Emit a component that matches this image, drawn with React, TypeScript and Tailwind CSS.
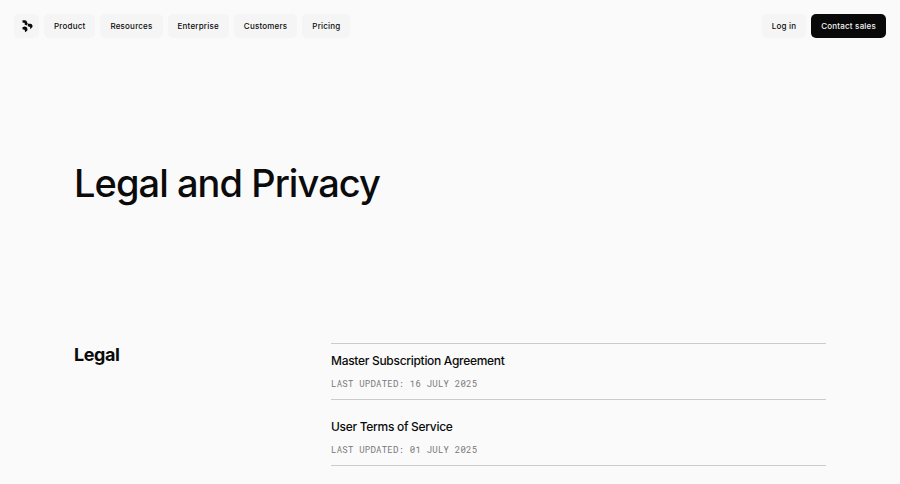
const NAV_ITEMS = ['Product', 'Resources', 'Enterprise', 'Customers', 'Pricing']

const DOCUMENTS = [
  { title: 'Master Subscription Agreement', updated: '16 July 2025' },
  { title: 'User Terms of Service', updated: '01 July 2025' },
]

const Logo = () => (
  <svg viewBox="0 0 24 24" className="size-6" fill="currentColor" aria-hidden="true">
    <path d="M7.5 6.2H9.8C11.2 6.2 11.8 7 12 8.2L12.8 9.8L11.6 11.4L9.6 10.6L9.8 9L7.5 8.4Z" />
    <path d="M12.8 9.8H15.2C16.8 9.8 17.6 11 17.6 12.8L15.4 15.2L15 13L12.8 12.2Z" />
    <path d="M7.5 13.2L9.6 12.6C11.4 12.8 12.4 13.6 12.4 15.2V16.6L10.2 18.2L9.6 15.8L7.5 15.2Z" />
  </svg>
)

const Header = () => (
  <header className="flex items-center justify-between px-[14px] pt-[14px] text-[8px] font-medium tracking-wide">
    <nav className="flex gap-[5px]">
      <a href="#" aria-label="Home" className="flex h-6 w-[25px] items-center justify-center rounded-[5px] bg-[#f5f5f5]">
        <Logo />
      </a>
      {NAV_ITEMS.map((item) => (
        <button key={item} type="button" className="h-6 rounded-[5px] bg-[#f5f5f5] px-[10px]">
          {item}
        </button>
      ))}
    </nav>
    <div className="flex gap-[5px]">
      <a href="#" className="flex h-6 items-center rounded-[5px] bg-[#f5f5f5] px-[10px]">Log in</a>
      <a href="#" className="flex h-6 items-center rounded-[5px] bg-[#090909] px-[10px] text-[#f4f4f4]">Contact sales</a>
    </div>
  </header>
)

const App = () => (
  <div className="min-h-screen bg-[#fafafa] font-['Inter',sans-serif] text-[#0b0b0b]">
    <Header />
    <main className="px-[74px]">
      <h1 className="pt-[121px] text-[38px] leading-[48px] font-medium tracking-tight">Legal and Privacy</h1>
      <section className="flex pt-[136px]">
        <h2 className="w-[257px] shrink-0 text-lg leading-6 font-bold tracking-tight">Legal</h2>
        <ul className="flex-1 border-t border-[#cccccc]">
          {DOCUMENTS.map((doc) => (
            <li key={doc.title} className="border-b border-[#cccccc] pt-[17px] pb-[7px] first:pt-[7px]">
              <a href="#" className="block text-xs leading-5 font-medium tracking-tight">{doc.title}</a>
              <p className="mt-[5px] font-['Roboto_Mono','Liberation_Mono',monospace] text-[9px] leading-4 tracking-wide text-[#777777] uppercase">
                Last updated: {doc.updated}
              </p>
            </li>
          ))}
        </ul>
      </section>
    </main>
  </div>
)

export default App
